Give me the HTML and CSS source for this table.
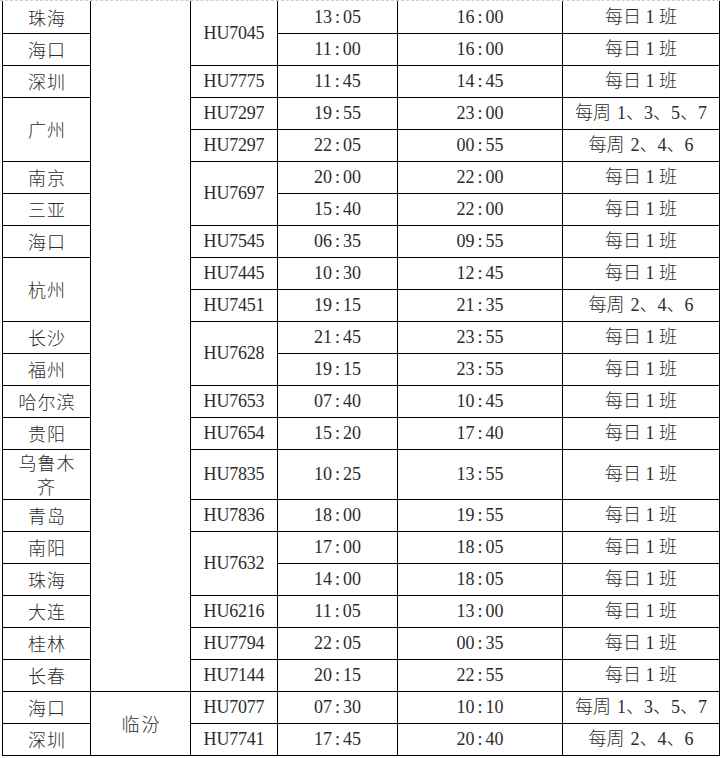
FILE: index.html
```html
<!DOCTYPE html>
<html lang="zh-CN">
<head>
<meta charset="utf-8">
<title>航班时刻表</title>
<link rel="stylesheet" href="styles.css">
</head>
<body>
<div class="sheet">
<table class="schedule">
<colgroup>
<col class="c-city"><col class="c-origin"><col class="c-flight"><col class="c-dep"><col class="c-arr"><col class="c-freq">
</colgroup>
<tbody>
<tr class="first"><td class="city">珠海</td><td class="origin" rowspan="21"></td><td class="flight" rowspan="2">HU7045</td><td class="time">13<span class="c">:</span>05</td><td class="time">16<span class="c">:</span>00</td><td class="freq">每日<span class="n">1</span>班</td></tr>
<tr><td class="city">海口</td><td class="time">11<span class="c">:</span>00</td><td class="time">16<span class="c">:</span>00</td><td class="freq">每日<span class="n">1</span>班</td></tr>
<tr><td class="city">深圳</td><td class="flight">HU7775</td><td class="time">11<span class="c">:</span>45</td><td class="time">14<span class="c">:</span>45</td><td class="freq">每日<span class="n">1</span>班</td></tr>
<tr><td class="city" rowspan="2">广州</td><td class="flight">HU7297</td><td class="time">19<span class="c">:</span>55</td><td class="time">23<span class="c">:</span>00</td><td class="freq">每周<span class="w">1</span>、3、5、7</td></tr>
<tr><td class="flight">HU7297</td><td class="time">22<span class="c">:</span>05</td><td class="time">00<span class="c">:</span>55</td><td class="freq">每周<span class="w">2</span>、4、6</td></tr>
<tr><td class="city">南京</td><td class="flight" rowspan="2">HU7697</td><td class="time">20<span class="c">:</span>00</td><td class="time">22<span class="c">:</span>00</td><td class="freq">每日<span class="n">1</span>班</td></tr>
<tr><td class="city">三亚</td><td class="time">15<span class="c">:</span>40</td><td class="time">22<span class="c">:</span>00</td><td class="freq">每日<span class="n">1</span>班</td></tr>
<tr><td class="city">海口</td><td class="flight">HU7545</td><td class="time">06<span class="c">:</span>35</td><td class="time">09<span class="c">:</span>55</td><td class="freq">每日<span class="n">1</span>班</td></tr>
<tr><td class="city" rowspan="2">杭州</td><td class="flight">HU7445</td><td class="time">10<span class="c">:</span>30</td><td class="time">12<span class="c">:</span>45</td><td class="freq">每日<span class="n">1</span>班</td></tr>
<tr><td class="flight">HU7451</td><td class="time">19<span class="c">:</span>15</td><td class="time">21<span class="c">:</span>35</td><td class="freq">每周<span class="w">2</span>、4、6</td></tr>
<tr><td class="city">长沙</td><td class="flight" rowspan="2">HU7628</td><td class="time">21<span class="c">:</span>45</td><td class="time">23<span class="c">:</span>55</td><td class="freq">每日<span class="n">1</span>班</td></tr>
<tr><td class="city">福州</td><td class="time">19<span class="c">:</span>15</td><td class="time">23<span class="c">:</span>55</td><td class="freq">每日<span class="n">1</span>班</td></tr>
<tr><td class="city">哈尔滨</td><td class="flight">HU7653</td><td class="time">07<span class="c">:</span>40</td><td class="time">10<span class="c">:</span>45</td><td class="freq">每日<span class="n">1</span>班</td></tr>
<tr><td class="city">贵阳</td><td class="flight">HU7654</td><td class="time">15<span class="c">:</span>20</td><td class="time">17<span class="c">:</span>40</td><td class="freq">每日<span class="n">1</span>班</td></tr>
<tr class="tall"><td class="city wrap">乌鲁木<br>齐</td><td class="flight">HU7835</td><td class="time">10<span class="c">:</span>25</td><td class="time">13<span class="c">:</span>55</td><td class="freq">每日<span class="n">1</span>班</td></tr>
<tr><td class="city">青岛</td><td class="flight">HU7836</td><td class="time">18<span class="c">:</span>00</td><td class="time">19<span class="c">:</span>55</td><td class="freq">每日<span class="n">1</span>班</td></tr>
<tr><td class="city">南阳</td><td class="flight" rowspan="2">HU7632</td><td class="time">17<span class="c">:</span>00</td><td class="time">18<span class="c">:</span>05</td><td class="freq">每日<span class="n">1</span>班</td></tr>
<tr><td class="city">珠海</td><td class="time">14<span class="c">:</span>00</td><td class="time">18<span class="c">:</span>05</td><td class="freq">每日<span class="n">1</span>班</td></tr>
<tr><td class="city">大连</td><td class="flight">HU6216</td><td class="time">11<span class="c">:</span>05</td><td class="time">13<span class="c">:</span>00</td><td class="freq">每日<span class="n">1</span>班</td></tr>
<tr><td class="city">桂林</td><td class="flight">HU7794</td><td class="time">22<span class="c">:</span>05</td><td class="time">00<span class="c">:</span>35</td><td class="freq">每日<span class="n">1</span>班</td></tr>
<tr><td class="city">长春</td><td class="flight">HU7144</td><td class="time">20<span class="c">:</span>15</td><td class="time">22<span class="c">:</span>55</td><td class="freq">每日<span class="n">1</span>班</td></tr>
<tr><td class="city">海口</td><td class="origin" rowspan="2">临汾</td><td class="flight">HU7077</td><td class="time">07<span class="c">:</span>30</td><td class="time">10<span class="c">:</span>10</td><td class="freq">每周<span class="w">1</span>、3、5、7</td></tr>
<tr><td class="city">深圳</td><td class="flight">HU7741</td><td class="time">17<span class="c">:</span>45</td><td class="time">20<span class="c">:</span>40</td><td class="freq">每周<span class="w">2</span>、4、6</td></tr>
</tbody>
</table>
</div>
</body>
</html>
```

FILE: styles.css
```css
html, body {
  margin: 0;
  padding: 0;
  background: #ffffff;
}

.sheet {
  width: 720px;
  border-top: 1px dashed #cfcfcf;
  box-sizing: border-box;
}

.schedule {
  margin-left: 2px;
  width: 717px;
  table-layout: fixed;
  border-collapse: collapse;
  font-family: "Liberation Serif", "Noto Sans CJK SC", serif;
  font-size: 18px;
  color: #2b2b2b;
  border-left: 1px solid #000;
  border-right: 1px solid #000;
  border-bottom: 1px solid #000;
}

.c-city { width: 88px; }
.c-origin { width: 100px; }
.c-flight { width: 87px; }
.c-dep { width: 120px; }
.c-arr { width: 165px; }
.c-freq { width: 157px; }

.schedule tr { height: 32px; }
.schedule tr.tall { height: 50px; }

.schedule td {
  border: 1px solid #000;
  padding: 0;
  text-align: center;
  vertical-align: middle;
  line-height: 22px;
  white-space: nowrap;
}

.schedule tr.first td { border-top: none; }

.city {
  font-family: "Noto Sans CJK SC", sans-serif;
  font-weight: 300;
  letter-spacing: 1px;
  text-indent: 1px;
}

.city.wrap { line-height: 24px; }

.origin {
  font-family: "Noto Sans CJK SC", sans-serif;
  font-weight: 300;
  letter-spacing: 2px;
  text-indent: 2px;
}

.flight { letter-spacing: -0.2px; }

.c {
  display: inline-block;
  width: 11px;
  text-align: center;
}

.freq {
  font-weight: 300;
}

.n { margin: 0 4.5px; }
.w { margin-left: 6px; }
```
